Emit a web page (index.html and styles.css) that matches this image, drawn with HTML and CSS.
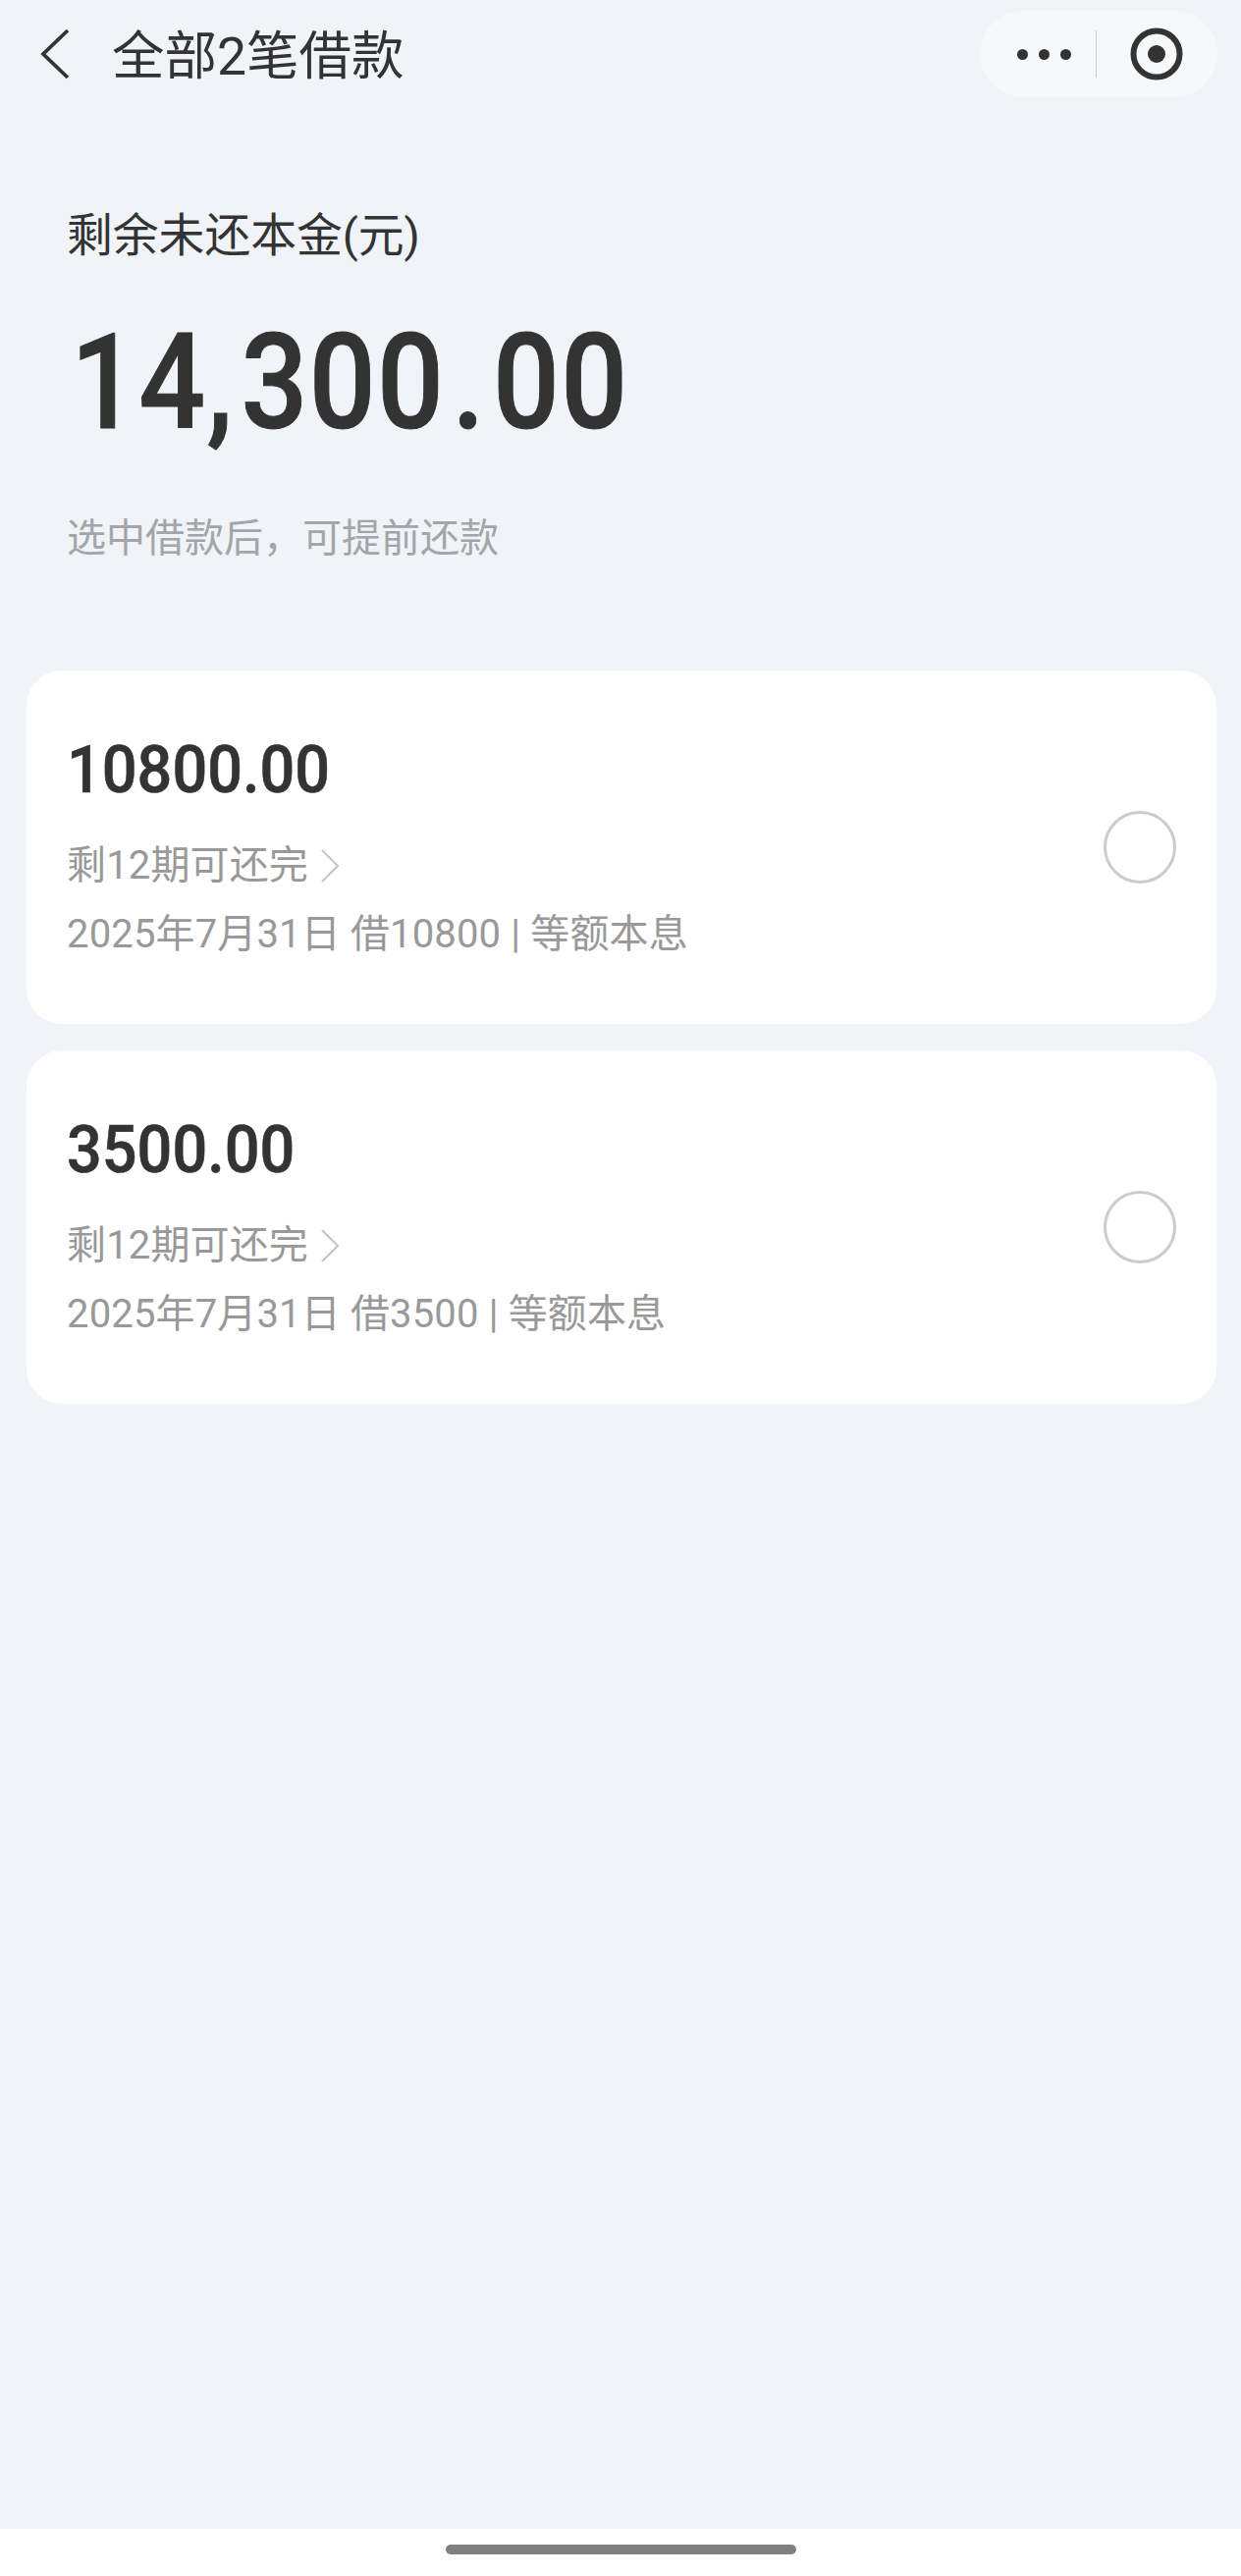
FILE: index.html
```html
<!DOCTYPE html>
<html lang="zh-CN">

<head>
  <meta charset="UTF-8">
  <meta name="viewport" content="width=device-width, initial-scale=1.0">
  <title>全部2笔借款</title>
  <link rel="stylesheet" href="styles.css">
</head>

<body>
  <div class="page">

    <div class="header">
      <svg class="back-icon" width="30" height="52" viewBox="0 0 30 52">
        <path d="M28 2 L3 26 L28 50" fill="none" stroke="#333" stroke-width="3.8" />
      </svg>
      <div class="header-title">全部2笔借款</div>
      <div class="capsule">
        <div class="capsule-dots">
          <span class="dot"></span>
          <span class="dot"></span>
          <span class="dot"></span>
        </div>
        <div class="capsule-line"></div>
        <svg class="capsule-target" width="54" height="54" viewBox="0 0 54 54">
          <circle cx="27" cy="27" r="23.5" fill="none" stroke="#333" stroke-width="6" />
          <circle cx="27" cy="27" r="9" fill="#333" />
        </svg>
      </div>
    </div>

    <div class="summary">
      <div class="summary-label">剩余未还本金(元)</div>
      <div class="summary-amount">14<span class="comma">,</span>300<span class="point">.</span>00</div>
      <div class="summary-tip">选中借款后，可提前还款</div>
    </div>

    <div class="loan-list">
      <div class="loan-card">
        <div class="loan-info">
          <div class="loan-amount">10800.00</div>
          <div class="loan-line loan-periods">
            剩12期可还完
            <svg class="chevron" width="20" height="36" viewBox="0 0 20 36">
              <path d="M2 2 L18 18 L2 34" fill="none" stroke="#c6c6c6" stroke-width="2.2" />
            </svg>
          </div>
          <div class="loan-line">2025年7月31日 借10800 | 等额本息</div>
        </div>
        <div class="radio"></div>
      </div>

      <div class="loan-card">
        <div class="loan-info">
          <div class="loan-amount">3500.00</div>
          <div class="loan-line loan-periods">
            剩12期可还完
            <svg class="chevron" width="20" height="36" viewBox="0 0 20 36">
              <path d="M2 2 L18 18 L2 34" fill="none" stroke="#c6c6c6" stroke-width="2.2" />
            </svg>
          </div>
          <div class="loan-line">2025年7月31日 借3500 | 等额本息</div>
        </div>
        <div class="radio"></div>
      </div>
    </div>

    <div class="home-bar">
      <div class="home-pill"></div>
    </div>

  </div>
</body>

</html>
```

FILE: styles.css
```css
body {
  margin: 0;
  background-color: #f0f3f8;
  color: #333;
  font-family: Roboto, "Noto Sans CJK SC", sans-serif;
}

.page {
  height: 2624px;
  display: flex;
  flex-direction: column;
  overflow: hidden;
}

/* top bar */
.header {
  height: 88px;
  padding: 11px 24px 0 41px;
  display: flex;
  align-items: center;
}

.back-icon {
  flex: none;
}

.header-title {
  margin-left: 43px;
  margin-top: 5px;
  font-size: 53.5px;
  line-height: 74px;
}

.capsule {
  margin-left: auto;
  width: 242px;
  height: 88px;
  border-radius: 44px;
  background-color: #f7f8fa;
  display: flex;
  align-items: center;
}

.capsule-dots {
  margin-left: 38px;
  display: flex;
  gap: 11px;
}

.dot {
  width: 11px;
  height: 11px;
  border-radius: 50%;
  background-color: #333;
}

.capsule-line {
  margin-left: 25px;
  width: 1px;
  height: 48px;
  background-color: #ccc;
}

.capsule-target {
  margin-left: 34px;
}

/* remaining principal */
.summary {
  padding: 108px 0 0 68px;
}

.summary-label {
  font-size: 46.8px;
  line-height: 66px;
}

.summary-amount {
  margin-top: 38px;
  margin-left: 4px;
  font-size: 135px;
  font-weight: 500;
  line-height: 158px;
  letter-spacing: 1.5px;
  white-space: nowrap;
  -webkit-text-stroke: 1px #333;
  transform: scaleX(0.885);
  transform-origin: left center;
}

.comma {
  margin-right: 8px;
}

.point {
  margin: 0 8px;
}

.summary-tip {
  margin-top: 52px;
  font-size: 40px;
  line-height: 56px;
  color: #a3a5a9;
}

/* loans */
.loan-list {
  margin: 106px 25px 0 27px;
  flex: 1;
  display: flex;
  flex-direction: column;
  gap: 27px;
}

.loan-card {
  height: 360px;
  box-sizing: border-box;
  padding: 0 41px;
  border-radius: 36px;
  background-color: #fff;
  display: flex;
  align-items: center;
  justify-content: space-between;
}

.loan-info {
  padding-top: 4px;
}

.loan-amount {
  font-size: 67px;
  font-weight: 500;
  line-height: 80px;
  margin-bottom: 23px;
  -webkit-text-stroke: 0.6px #333;
  transform: scaleX(0.94);
  transform-origin: left center;
}

.loan-line {
  font-size: 40px;
  line-height: 70px;
  letter-spacing: 0.15px;
  color: #999;
  white-space: nowrap;
}

.loan-periods {
  display: flex;
  align-items: center;
}

.chevron {
  margin-left: 12px;
}

.radio {
  width: 74px;
  height: 74px;
  box-sizing: border-box;
  border: 3px solid #ccc;
  border-radius: 50%;
}

/* home indicator */
.home-bar {
  height: 48px;
  background-color: #fff;
  display: flex;
  justify-content: center;
  padding-top: 16px;
  box-sizing: border-box;
}

.home-pill {
  width: 357px;
  height: 10px;
  border-radius: 5px;
  background-color: #808080;
}
```
